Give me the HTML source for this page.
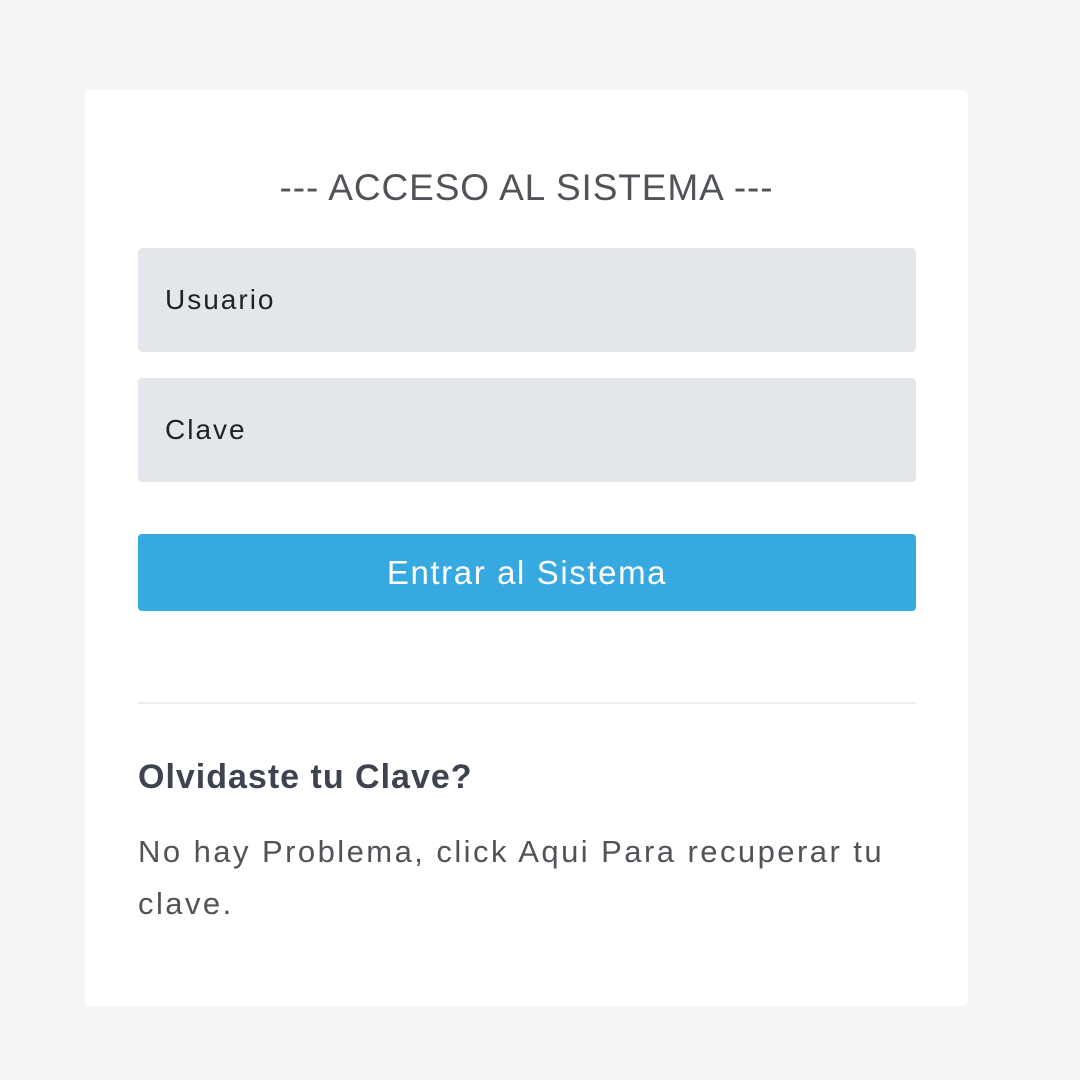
<!DOCTYPE html>
<html><head><meta charset="utf-8"><style>
html,body{margin:0;padding:0;width:1080px;height:1080px;background:#f5f5f5;overflow:hidden;font-family:"Liberation Sans",sans-serif;}
.card{position:absolute;left:85px;top:90px;width:883px;height:916px;background:#fff;border-radius:5px;}
.t{position:absolute;left:85px;width:883px;top:166px;text-align:center;font-size:37px;color:#505458;letter-spacing:0.9px;line-height:44px;}
.in{position:absolute;left:138px;width:778px;height:104px;background:#e3e6ea;border-radius:4px;font-size:28px;color:#222;line-height:104px;box-sizing:border-box;padding-left:27px;letter-spacing:2px;}
.btn{position:absolute;left:138px;top:534px;width:778px;height:77px;background:#36a9e1;border-radius:4px;color:#fff;font-size:33px;text-align:center;line-height:77px;letter-spacing:1.6px;}
.hr{position:absolute;left:138px;top:702px;width:778px;height:2px;background:#eeeeee;}
.h{position:absolute;left:138px;top:758px;font-size:34px;font-weight:bold;color:#3d4450;letter-spacing:1px;}
.p{position:absolute;left:138px;top:826px;width:800px;font-size:31px;line-height:52px;color:#505458;letter-spacing:2.45px;white-space:nowrap;}
</style></head><body>
<div class="card"></div>
<div class="t">--- ACCESO AL SISTEMA ---</div>
<div class="in" style="top:248px">Usuario</div>
<div class="in" style="top:378px">Clave</div>
<div class="btn">Entrar al Sistema</div>
<div class="hr"></div>
<div class="h">Olvidaste tu Clave?</div>
<div class="p">No hay Problema, click Aqui Para recuperar tu<br>clave.</div>
</body></html>
